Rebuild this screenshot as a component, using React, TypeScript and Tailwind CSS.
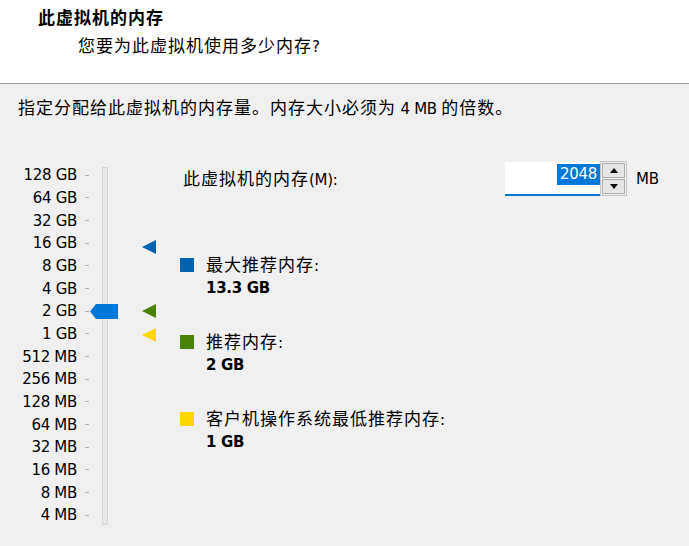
import React from 'react';

const Zh: React.FC<{ children: React.ReactNode; className?: string }> = ({ children, className = '' }) => (
    <span className={`font-['Noto_Sans_CJK_SC',sans-serif] text-[17px] tracking-[1px] ${className}`}>{children}</span>
);

const scale = [
    '128 GB', '64 GB', '32 GB', '16 GB', '8 GB', '4 GB', '2 GB', '1 GB',
    '512 MB', '256 MB', '128 MB', '64 MB', '32 MB', '16 MB', '8 MB', '4 MB',
];

const Marker: React.FC<{ color: string; top: string }> = ({ color, top }) => (
    <svg className={`absolute left-0 ${top}`} width="14" height="14" viewBox="0 0 14 14">
        <polygon points="0,7 14,0 14,14" fill={color} />
    </svg>
);

interface LegendProps {
    color: string;
    label: string;
    value: string;
    className?: string;
}

const Legend: React.FC<LegendProps> = ({ color, label, value, className = '' }) => (
    <div className={className}>
        <div className="flex items-center h-[20px]">
            <div className={`w-[14px] h-[14px] ${color}`} />
            <div className="ml-[12px]">
                <Zh>{label}</Zh>:
            </div>
        </div>
        <div className="ml-[26px] mt-[3px] font-bold">{value}</div>
    </div>
);

const SpinButton: React.FC<{ up?: boolean }> = ({ up }) => (
    <div className="flex-1 border border-[#adadad] bg-[#e5e5e5] flex items-center justify-center">
        <svg width="8" height="5" viewBox="0 0 8 5">
            <polygon points={up ? '0,5 8,5 4,0' : '0,0 8,0 4,5'} fill="#000" />
        </svg>
    </div>
);

export default function App() {
    return (
        <div className="w-[689px] h-[546px] overflow-hidden bg-[#f0f0f0] text-black text-[15px] tracking-[-0.3px] leading-[20px] font-['DejaVu_Sans','Noto_Sans_CJK_SC',sans-serif]">
            {/* header */}
            <div className="h-[84px] bg-white border-b border-[#a0a0a0] pt-[5px]">
                <div className="pl-[38px] leading-[24px]">
                    <Zh className="font-bold">此虚拟机的内存</Zh>
                </div>
                <div className="pl-[78px] mt-[4px]">
                    <Zh>您要为此虚拟机使用多少内存</Zh>?
                </div>
            </div>

            <div className="pl-[18px] pt-[13px]">
                <Zh>指定分配给此虚拟机的内存量。内存大小必须为</Zh> 4 MB <Zh>的倍数。</Zh>
            </div>

            <div className="flex items-start mt-[42px]">
                {/* slider */}
                <div className="flex mt-[3px]">
                    <div className="flex flex-col w-[89px]">
                        {scale.map(s => (
                            <div key={s} className="h-[22.67px] flex items-center justify-end">
                                <span>{s}</span>
                                <div className="ml-[8px] w-[4px] h-px bg-[#b4b4b4]" />
                            </div>
                        ))}
                    </div>
                    <div className="relative ml-[13px] w-[6px]">
                        <div className="mt-[3px] h-[358px] border border-[#d6d6d6] bg-[#e7eaea]" />
                        <div className="absolute left-[-12px] top-[140px] w-[28px] h-[15px] bg-[#0078d7] [clip-path:polygon(0_50%,6px_0,100%_0,100%_100%,6px_100%)]" />
                    </div>
                    <div className="relative ml-[34px] w-[14px]">
                        <Marker color="#0063b1" top="top-[76px]" />
                        <Marker color="#498205" top="top-[140px]" />
                        <Marker color="#ffd700" top="top-[163.5px]" />
                    </div>
                </div>

                {/* right side */}
                <div className="ml-[24px] flex flex-col">
                    <div className="flex items-start h-[35px]">
                        <div className="w-[325px] pl-[3px] h-[35px] flex items-center">
                            <span>
                                <Zh>此虚拟机的内存</Zh>(M):
                            </span>
                        </div>
                        <div className="w-[95px] h-[34px] mt-[1px] bg-white border-b-2 border-[#0078d7] flex justify-end items-start pt-[2px]">
                            <span className="bg-[#0078d7] text-white px-[3px] h-[21px] leading-[21px]">2048</span>
                        </div>
                        <div className="w-[27px] h-[35px] border border-[#c4c4c4] p-px flex flex-col gap-px bg-[#f0f0f0]">
                            <SpinButton up />
                            <SpinButton />
                        </div>
                        <div className="ml-[9px] h-[35px] flex items-center">MB</div>
                    </div>

                    <Legend className="mt-[59px]" color="bg-[#0063b1]" label="最大推荐内存" value="13.3 GB" />
                    <Legend className="mt-[34px]" color="bg-[#498205]" label="推荐内存" value="2 GB" />
                    <Legend className="mt-[34px]" color="bg-[#ffd700]" label="客户机操作系统最低推荐内存" value="1 GB" />
                </div>
            </div>
        </div>
    );
}
